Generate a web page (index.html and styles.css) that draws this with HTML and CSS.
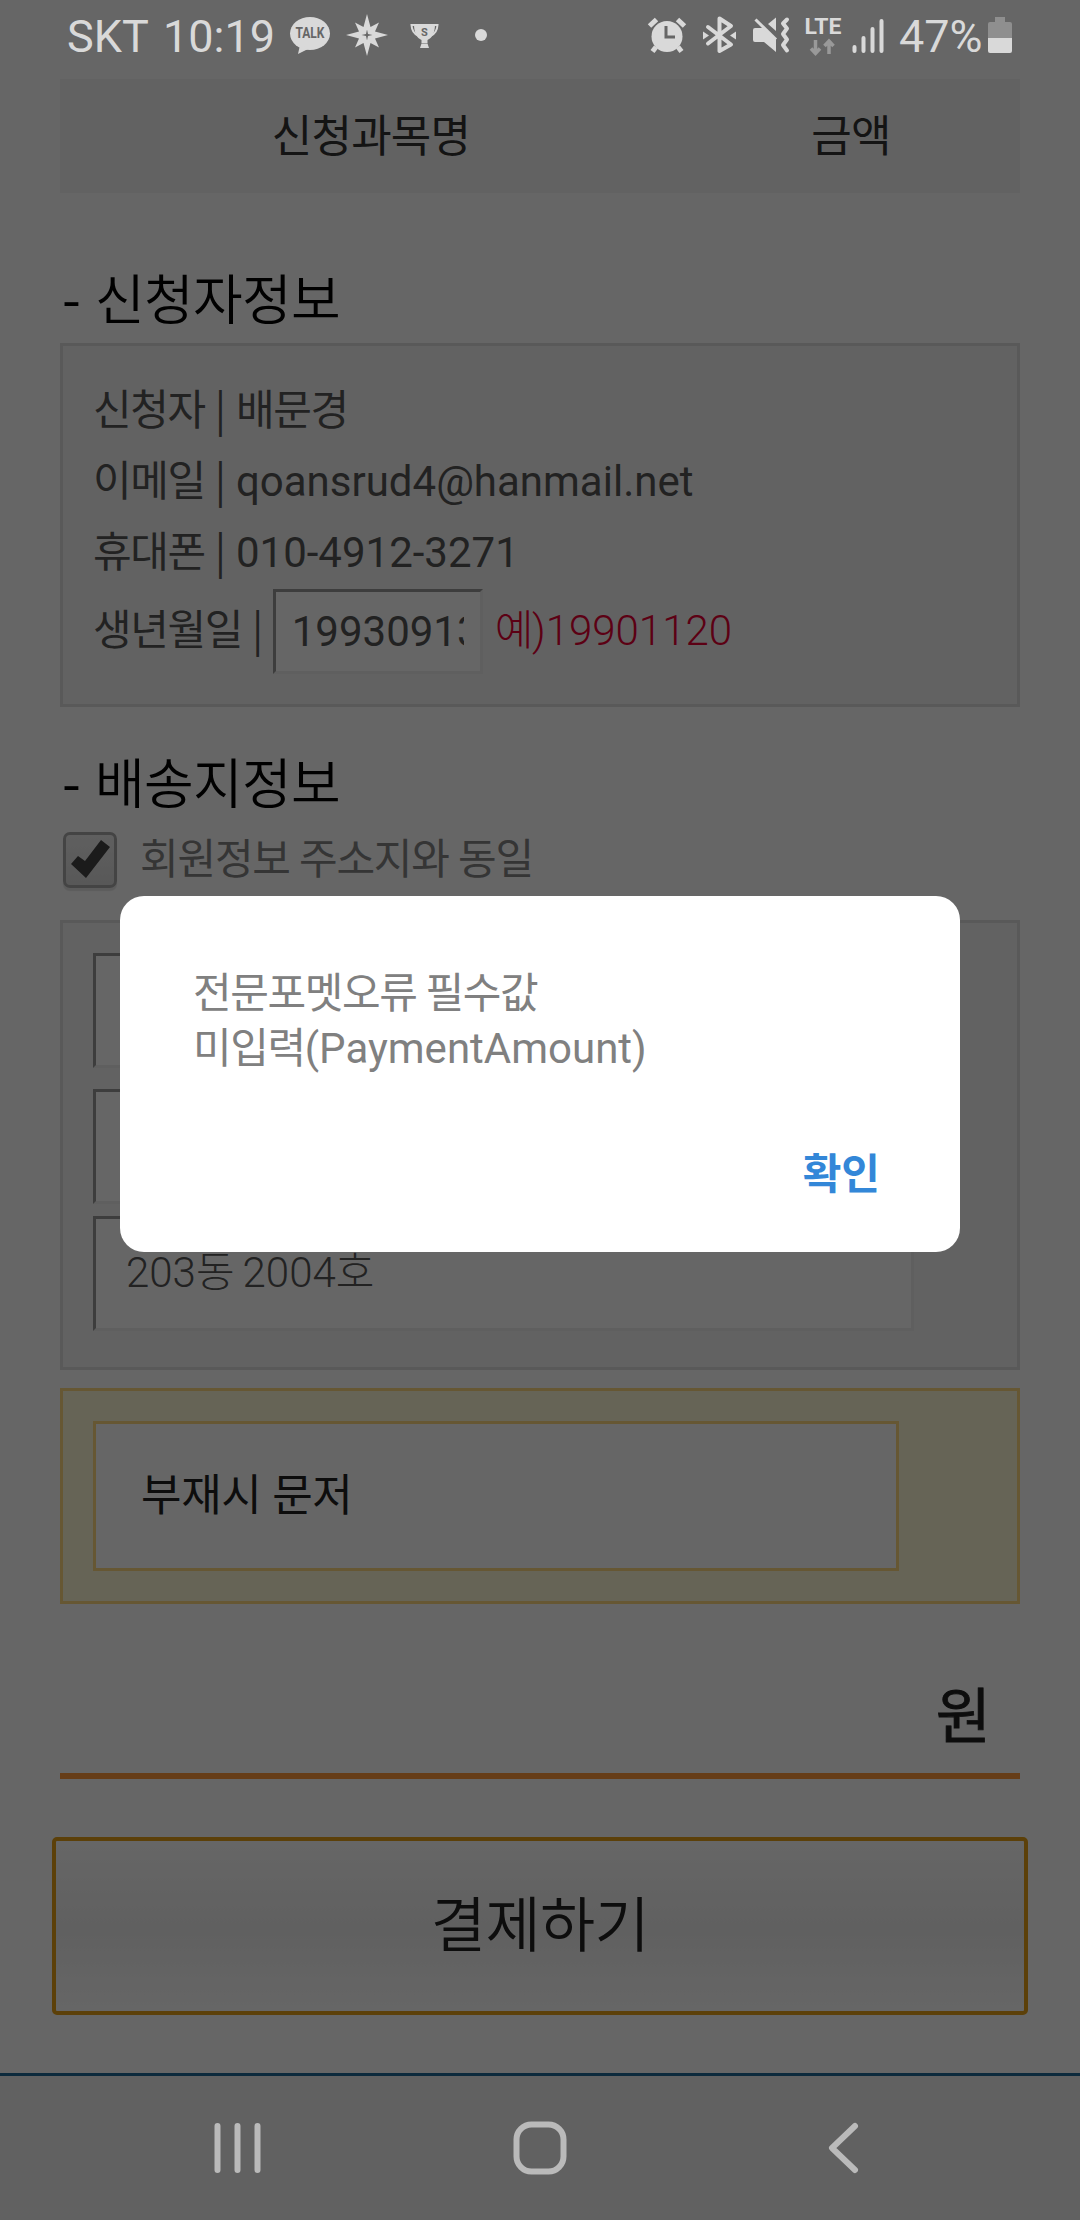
FILE: index.html
```html
<!DOCTYPE html>
<html lang="ko">
<head>
<meta charset="utf-8">
<title>결제하기</title>
<link rel="stylesheet" href="styles.css">
</head>
<body>
<div class="screen">
  <main class="page">
    <div class="table-head"><span class="col-name">신청과목명</span><span class="col-price">금액</span></div>

    <h2 class="title title-first"><span class="dash">-</span>신청자정보</h2>
    <section class="panel applicant">
      <p class="row"><span class="ko">신청자</span> <span class="bar">|</span> <span class="ko">배문경</span></p>
      <p class="row"><span class="ko">이메일</span> <span class="bar">|</span> qoansrud4@hanmail.net</p>
      <p class="row"><span class="ko">휴대폰</span> <span class="bar">|</span> 010-4912-3271</p>
      <div class="row birth"><span><span class="ko">생년월일</span> <span class="bar">|</span></span><div class="field birth-field"><span>19930913</span></div><span class="hint"><span class="ko">예</span>)19901120</span></div>
    </section>

    <h2 class="title title-second"><span class="dash">-</span>배송지정보</h2>
    <div class="same">
      <span class="checkbox"><svg width="54" height="56" viewBox="0 0 54 56"><path d="M8 32 15 24 22 29 38 8 47 15 23 46Z"/></svg></span>
      <span class="same-label">회원정보 주소지와 동일</span>
    </div>
    <section class="panel address">
      <div class="field zip"></div>
      <div class="field street"></div>
      <div class="field detail">203<span class="ko">동</span> 2004<span class="ko">호</span></div>
    </section>
    <section class="memo"><div class="memo-field">부재시 문저</div></section>

    <div class="total">원</div>
    <div class="pay">결제하기</div>
    <div class="footer"></div>
  </main>

  <div class="scrim"></div>

  <header class="status">
    <span class="carrier">SKT</span>
    <span class="clock">10:19</span>
    <svg class="notices" width="200" height="70" viewBox="288 0 200 70">
      <ellipse cx="310" cy="33.500" rx="20" ry="16.500"/>
      <path d="M300 45 298 54 310 48Z"/>
      <text x="310" y="38.200" class="talk" textLength="29" lengthAdjust="spacingAndGlyphs">TALK</text>
      <path fill-rule="evenodd" d="M367 14 370.500 27 379 22.500 375 31.500 388 35 375 38.500 379 47.500 370.500 43 367 56 363.500 43 355 47.500 359 38.500 346 35 359 31.500 355 22.500 363.500 27ZM367 29.500 366 34 361.500 35 366 36 367 40.500 368 36 372.500 35 368 34Z"/>
      <path d="M414 24H435C435 33 432 38 427.500 40V43H421.500V40C417 38 414 33 414 24Z"/>
      <path class="handle" d="M415 25H411.500Q412 33 418 35.500M434 25H437.500Q437 33 431 35.500"/>
      <path d="M421.500 43.500H427.500L429 48H420Z"/>
      <text x="424.500" y="35.500" class="cup">S</text>
      <circle cx="481" cy="35" r="6"/>
    </svg>
    <svg class="signals" width="242" height="70" viewBox="646 0 242 70">
      <circle cx="667" cy="36.500" r="15.500"/>
      <path class="line5" d="M649.500 26 656.500 19.500M684.500 26 677.500 19.500M656 47 652.500 51.500M678 47 681.500 51.500"/>
      <path class="cut" d="M666 26V37H675"/>
      <path class="line4" d="M708 27 731 44.500 719.500 51V18.500L731 26 708 43.500"/>
      <path d="M703 31.500 709 35.500 703 39.500ZM736 31.500 730 35.500 736 39.500Z"/>
      <path d="M755 28H763L776 39V52L764 42H755Q753 42 753 40V30Q753 28 755 28ZM768 24 776 17.500V31Z"/>
      <path class="line3" d="M755.500 19.500 776 39.500"/>
      <path class="line4" d="M787 19.500 783 23.500 787 28.500 783 34 787 39.500 783 45 787 50.500"/>
      <text x="804.500" y="34" class="lte" textLength="37" lengthAdjust="spacingAndGlyphs">LTE</text>
      <path class="data" d="M815.500 40V53M811 48.500 815.500 53.500 820 48.500M829 54V41M824.500 46 829 41 833.500 46"/>
      <path class="line4" d="M854.500 47V51M863.500 38V51M872.500 29V51M881.500 21V51"/>
    </svg>
    <span class="percent">47%</span>
    <svg class="battery" width="24" height="36" viewBox="0 0 24 36"><path class="empty" d="M7 0H17V5H22Q24 5 24 7V21H0V7Q0 5 2 5H7Z"/><path d="M0 21H24V34Q24 36 22 36H2Q0 36 0 34Z"/></svg>
  </header>

  <div class="dialog">
    <p class="message"><span class="ko">전문포멧오류 필수값</span><br><span class="ko">미입력</span>(PaymentAmount)</p>
    <div class="confirm">확인</div>
  </div>

  <nav class="navbar">
    <svg width="54" height="54" viewBox="0 0 54 54"><path d="M7.500 5V49M27.500 5V49M47.500 5V49"/></svg>
    <svg width="54" height="54" viewBox="0 0 54 54"><rect x="3.500" y="3.500" width="47" height="47" rx="15"/></svg>
    <svg width="54" height="54" viewBox="0 0 54 54"><path d="M39 5 16 27 39 49"/></svg>
  </nav>
</div>
</body>
</html>
```
FILE: styles.css
```css
* { box-sizing: border-box; }
body { margin: 0; }
.screen {
  position: relative;
  width: 1080px;
  height: 2220px;
  overflow: hidden;
  background: #fff;
  font-family: Roboto, "Noto Sans CJK KR", sans-serif;
  font-size: 42px;
  color: #555;
  white-space: nowrap;
}
.page { display: flex; flex-direction: column; height: 100%; padding-top: 79px; }
.page > * { flex: none; }
.ko { letter-spacing: -1.4px; }
.bar { margin: 0 -.5px; font-family: "Noto Sans CJK KR", sans-serif; line-height: 1; }

.table-head {
  display: flex;
  align-items: center;
  height: 114px;
  margin: 0 60px;
  padding-bottom: 6px;
  background: #f5f5f5;
  color: #333;
  font-size: 44px;
  letter-spacing: -.8px;
}
.col-name { width: 622px; text-align: center; }
.col-price { width: 338px; text-align: center; }

.title {
  display: flex;
  height: 60px;
  margin: 0 60px;
  line-height: 62px;
  color: #000;
  font-size: 54px;
  font-weight: 350;
  letter-spacing: -.7px;
}
.dash { width: 35px; padding-left: 2px; font-family: "Noto Sans CJK KR", sans-serif; font-weight: 400; }
.title-first { margin-top: 78px; margin-bottom: 12px; }
.title-second { margin-top: 48px; margin-bottom: 17px; }

.panel { margin: 0 60px; border: 3px solid #dedede; background: #f5f5f5; }
.applicant { height: 364px; padding: 30px; }
.row { height: 71px; margin: 0; line-height: 70px; }
.birth { display: flex; align-items: center; height: 84px; }
.field {
  border: 3px solid;
  border-color: #999 #eee #eee #999;
  background: #fff;
}
.birth-field { width: 210px; height: 85px; margin: 0 12px 0 10px; padding: 0 16px; line-height: 79px; }
.birth-field span { display: block; overflow: hidden; }
.hint { color: #e60033; font-weight: 300; }

.same { display: flex; align-items: center; height: 56px; margin: 0 63px 32px; }
.checkbox {
  width: 54px;
  height: 56px;
  border: 3px solid #aaa;
  border-radius: 7px;
  background: linear-gradient(#eee, #dcdcdc);
  box-shadow: 0 3px 1px #e6e6e6;
}
.checkbox svg { display: block; margin: -3px; fill: #444; }
.same-label { margin-left: 23px; padding-bottom: 10px; color: #858585; letter-spacing: -1.2px; }

.address { display: flex; flex-direction: column; align-items: flex-start; height: 450px; padding: 30px; }
.address .field { flex: none; height: 115px; padding: 0 30px; line-height: 108px; font-weight: 300; }
.address .ko { letter-spacing: -2.2px; }
.zip { width: 300px; margin-bottom: 21px; }
.street { width: 821px; margin-bottom: 12px; }
.detail { width: 821px; }

.memo { height: 216px; margin: 18px 60px 0; padding: 30px; border: 3px solid #ffda80; background: #fffad6; }
.memo-field {
  width: 806px;
  height: 150px;
  padding-left: 45px;
  border: 3px solid #ffda80;
  background: #fff;
  color: #222;
  font-size: 44px;
  line-height: 145px;
  letter-spacing: -.3px;
}

.total {
  height: 175px;
  margin: 0 60px;
  padding-right: 29px;
  border-bottom: 6px solid #ff9a3c;
  color: #222;
  font-size: 60px;
  -webkit-text-stroke: .8px #222;
  line-height: 228px;
  text-align: right;
}
.pay {
  height: 178px;
  margin: 58px 52px 0;
  border: 4px solid #e6a117;
  border-radius: 5px;
  background: linear-gradient(#fff, #f0f0f0 52%, #fff);
  color: #222;
  font-size: 60px;
  font-weight: 350;
  letter-spacing: -.6px;
  line-height: 171px;
  text-align: center;
}
.footer { height: 147px; margin-top: 58px; border-top: 3px solid #1e6996; background: #f2f2f2; }

.scrim { position: absolute; inset: 0; background: rgba(0, 0, 0, .6); }

.status {
  position: absolute;
  inset: 0 0 auto 0;
  display: flex;
  height: 70px;
  padding-left: 67px;
  color: #d9d9d9;
  fill: #d9d9d9;
  font-size: 45px;
  line-height: 74px;
}
.status svg { flex: none; display: block; }
.carrier { width: 96px; }
.clock { width: 125px; }
.signals { margin-left: 158px; }
.percent { width: 89px; margin-left: 11px; }
.battery { margin-top: 17px; }
.talk { fill: #666; font: 700 14px Roboto, sans-serif; text-anchor: middle; }
.cup { fill: #666; font: 700 11px Roboto, sans-serif; text-anchor: middle; }
.lte { font: 700 22px Roboto, sans-serif; }
.handle, .line3, .line4, .line5, .data, .cut { fill: none; stroke: #d9d9d9; }
.handle { stroke-width: 2; }
.line3 { stroke-width: 3; }
.line4 { stroke-width: 4; stroke-linecap: round; stroke-linejoin: round; }
.line5 { stroke-width: 5; }
.data { stroke: #999; stroke-width: 3.500px; }
.cut { stroke: #666; stroke-width: 3; }
.empty { fill: #8f8f8f; }

.dialog {
  position: absolute;
  left: 120px;
  top: 896px;
  width: 840px;
  height: 356px;
  padding: 70px 80px 0 73px;
  border-radius: 24px;
  background: #fff;
}
.message { margin: 0; line-height: 55px; color: #808080; }
.confirm { margin-top: 69px; color: #3387d8; font-weight: 700; line-height: 60px; text-align: right; }

.navbar {
  position: absolute;
  inset: auto 0 0 0;
  display: flex;
  justify-content: center;
  align-items: center;
  gap: 249px;
  height: 144px;
}
.navbar svg { fill: none; stroke: #bababa; stroke-width: 6px; stroke-linecap: round; stroke-linejoin: round; }
```
